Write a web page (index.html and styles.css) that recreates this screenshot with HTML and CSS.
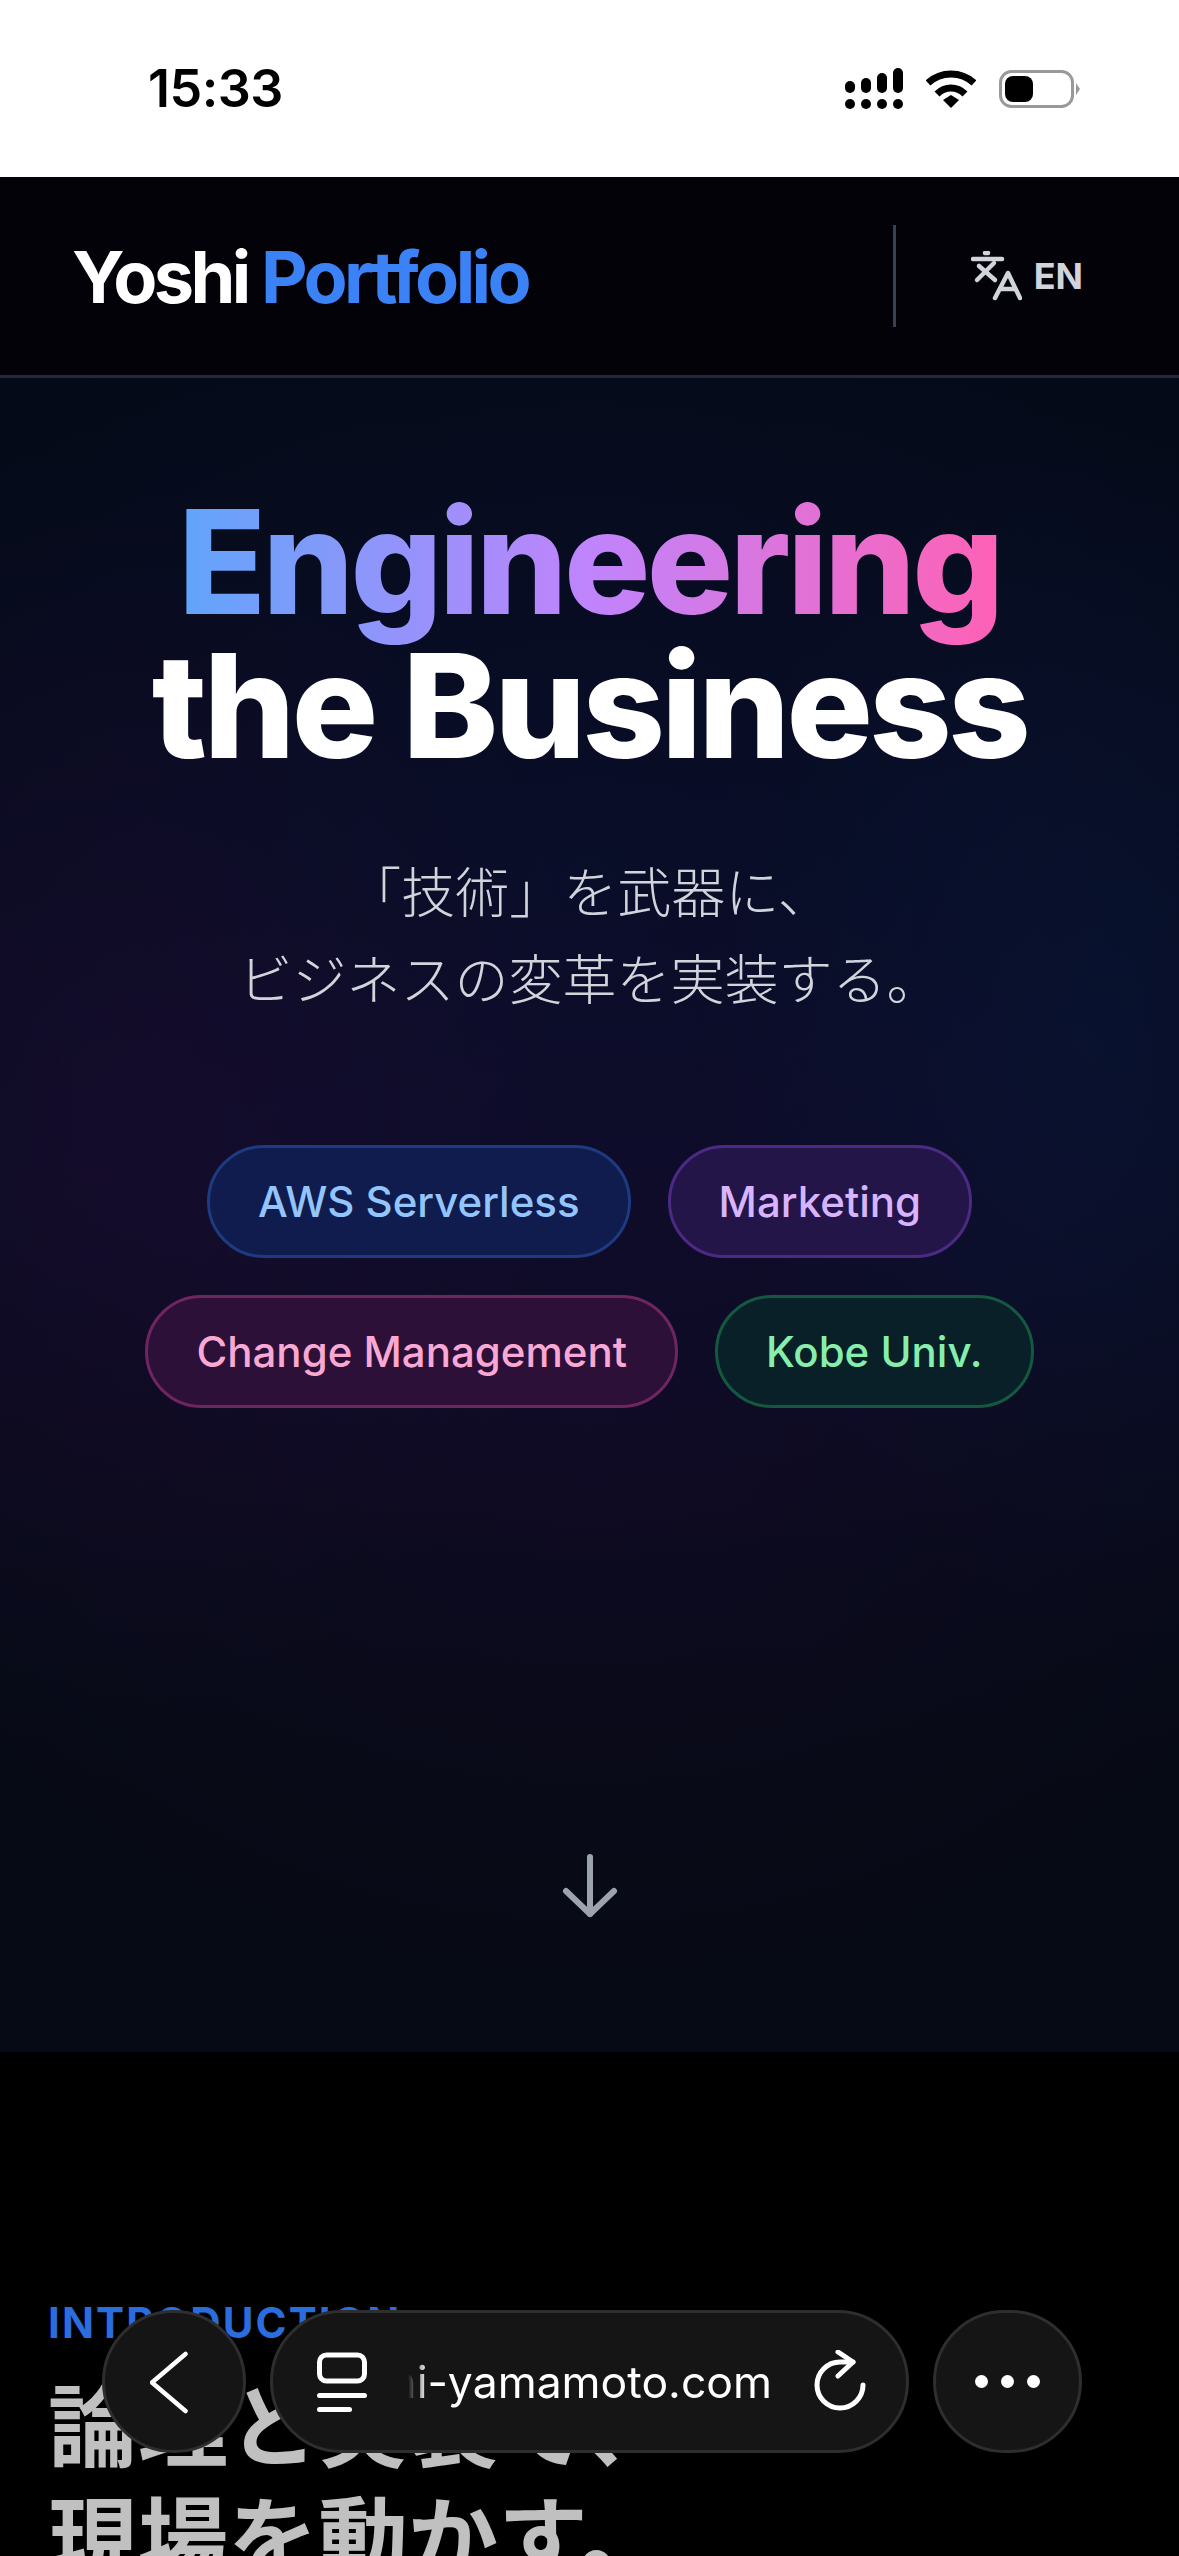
FILE: index.html
```html
<!DOCTYPE html>
<html lang="ja">
<head>
    <meta charset="UTF-8">
    <meta name="viewport" content="width=device-width, initial-scale=1.0">
    <title>Yoshi Portfolio</title>
    <link rel="stylesheet" href="styles.css">
</head>
<body>

    <div class="status-bar">
        <span class="status-time">15:33</span>
        <div class="status-icons">
            <svg width="58" height="42" viewBox="0 0 58 42" fill="#000">
                <rect x="0" y="13" width="10" height="12" rx="5"/>
                <rect x="16" y="10" width="10" height="15" rx="5"/>
                <rect x="32" y="5" width="10" height="20" rx="5"/>
                <rect x="48" y="0" width="10" height="25" rx="5"/>
                <rect x="0" y="31" width="10" height="10" rx="5"/>
                <rect x="16" y="31" width="10" height="10" rx="5"/>
                <rect x="32" y="31" width="10" height="10" rx="5"/>
                <rect x="48" y="31" width="10" height="10" rx="5"/>
            </svg>
            <svg width="50" height="38" viewBox="0 0 50 38" fill="none" stroke="#000" stroke-width="7">
                <path d="M2 13 C15 1 35 1 48 13"/>
                <path d="M11 24 C19 16 31 16 39 24"/>
                <path d="M17 30 L25 25 L33 30 L25 38 Z" fill="#000" stroke="none"/>
            </svg>
            <svg width="82" height="38" viewBox="0 0 82 38">
                <rect x="1.5" y="1.5" width="72" height="35" rx="11" fill="none" stroke="#999" stroke-width="3"/>
                <rect x="6" y="6" width="28" height="26" rx="8" fill="#000"/>
                <path d="M77 13 L81 19 L77 25 Z" fill="#999"/>
            </svg>
        </div>
    </div>

    <nav class="site-nav">
        <a class="logo">Yoshi <span class="logo-accent">Portfolio</span></a>
        <div class="nav-lang">
            <svg width="51" height="51" viewBox="0 0 51 51" fill="none" stroke="#d1d5db" stroke-width="4.5" stroke-linecap="round" stroke-linejoin="round">
                <path d="M2 8 H31"/>
                <path d="M14 2 H17"/>
                <path d="M6 29 L23 12"/>
                <path d="M8 15 L24 29"/>
                <path d="M24 47 L37 22 L49 47"/>
                <path d="M29 38 H44"/>
            </svg>
            <span>EN</span>
        </div>
    </nav>

    <header class="hero">
        <h1 class="hero-title">
            <span class="hero-gradient">Engineering</span><br>the Business
        </h1>
        <p class="hero-sub">「技術」を武器に、<br>ビジネスの変革を実装する。</p>
        <div class="tags">
            <span class="tag tag-blue">AWS Serverless</span>
            <span class="tag tag-purple">Marketing</span>
            <span class="tag tag-pink">Change Management</span>
            <span class="tag tag-green">Kobe Univ.</span>
        </div>
        <svg class="hero-arrow" width="72" height="72" viewBox="0 0 72 72" fill="none" stroke="#9ca3af" stroke-width="6" stroke-linecap="round" stroke-linejoin="round">
            <path d="M36 7 V64"/>
            <path d="M12 41 L36 64 L60 41"/>
        </svg>
    </header>

    <section class="intro">
        <p class="intro-label">INTRODUCTION</p>
        <h2 class="intro-title">論理と実装で、<br>現場を動かす。</h2>
    </section>

    <!-- browser toolbar, floats over the page -->
    <div class="toolbar">
        <button class="tool-btn">
            <svg width="48" height="66" viewBox="0 0 48 66" fill="none" stroke="#fff" stroke-width="4.5" stroke-linecap="round" stroke-linejoin="round">
                <path d="M35.5 5 L2 33.5 L35.5 62"/>
            </svg>
        </button>
        <div class="tool-url">
            <svg width="54" height="62" viewBox="0 0 54 62" fill="none" stroke="#fff" stroke-width="5" stroke-linecap="round" stroke-linejoin="round">
                <rect x="4.5" y="4" width="45" height="26" rx="7"/>
                <path d="M4.5 44.5 H49.5"/>
                <path d="M4.5 58.5 H34.5"/>
            </svg>
            <div class="tool-host"><span>hi-yamamoto.com</span></div>
            <svg width="54" height="64" viewBox="0 0 54 64" fill="none" stroke="#fff" stroke-width="5" stroke-linecap="round" stroke-linejoin="round">
                <path d="M40 12 H27 A23 23 0 1 0 50 35"/>
                <path d="M25 2 L40 12 L25 26"/>
            </svg>
        </div>
        <button class="tool-btn tool-more">
            <i></i><i></i><i></i>
        </button>
    </div>

</body>
</html>
```

FILE: styles.css
```css
/* Reset */
* {
    margin: 0;
    padding: 0;
    box-sizing: border-box;
}

body {
    width: 1179px;
    height: 2556px;
    overflow: hidden;
    background-color: #000;
    color: #fff;
    font-family: 'Inter', 'Noto Sans CJK JP', sans-serif;
}

/* Status bar */
.status-bar {
    height: 177px;
    background-color: #fff;
    color: #000;
    display: flex;
    justify-content: space-between;
    align-items: center;
    padding: 0 98px 0 148px;
}

.status-time {
    font-family: 'Inter', sans-serif;
    font-size: 52px;
    font-weight: 600;
    letter-spacing: -0.5px;
}

.status-icons {
    display: flex;
    align-items: center;
    gap: 23px;
}

/* Nav */
.site-nav {
    height: 201px;
    background-color: #020208;
    border-bottom: 3px solid #1e293b;
    display: flex;
    justify-content: space-between;
    align-items: center;
    padding: 0 96px 0 72px;
}

.logo {
    font-size: 72px;
    font-weight: 700;
    letter-spacing: -3.6px;
    color: #fff;
}

.logo-accent {
    color: #3b82f6;
}

.nav-lang {
    display: flex;
    align-items: center;
    gap: 12px;
    height: 102px;
    padding-left: 75px;
    border-left: 3px solid #374151;
    color: #d1d5db;
    font-size: 36px;
    font-weight: 700;
}

/* Hero */
.hero {
    height: 1674px;
    display: flex;
    flex-direction: column;
    align-items: center;
    padding-top: 112px;
    background:
        radial-gradient(ellipse 480px 620px at 110px 720px, rgba(90, 15, 90, 0.13), transparent),
        radial-gradient(ellipse 400px 600px at 1100px 640px, rgba(10, 40, 90, 0.22), transparent),
        radial-gradient(ellipse 800px 600px at 50% 1050px, rgba(40, 10, 60, 0.25), transparent),
        radial-gradient(ellipse 800px 700px at 50% 500px, rgba(15, 20, 70, 0.3), transparent),
        linear-gradient(#050a18, #080b20 50%, #060a14 85%);
}

.hero-title {
    font-size: 144px;
    font-weight: 800;
    line-height: 144px;
    letter-spacing: -3.6px;
    text-align: center;
}

.hero-gradient {
    background: linear-gradient(90deg, #60a5fa, #c084fc, #ff61b4);
    background-clip: text;
    -webkit-background-clip: text;
    color: transparent;
}

.hero-sub {
    margin-top: 72px;
    font-size: 54px;
    font-weight: 300;
    line-height: 87px;
    color: #d1d5db;
    text-align: center;
}

.tags {
    display: flex;
    flex-wrap: wrap;
    justify-content: center;
    gap: 37px;
    width: 1000px;
    margin-top: 121px;
}

.tag {
    height: 113px;
    padding: 0 48px;
    border: 3px solid;
    border-radius: 57px;
    display: flex;
    align-items: center;
    font-size: 42px;
    font-weight: 500;
}

.tag-blue {
    background-color: #111c4e;
    border-color: #1e3a80;
    color: #93c5fd;
}

.tag-purple {
    background-color: #231548;
    border-color: #4c2a84;
    color: #d8b4fe;
}

.tag-pink {
    background-color: #2d1038;
    border-color: #6f2560;
    color: #f9a8d4;
}

.tag-green {
    background-color: #0a2029;
    border-color: #14583f;
    color: #86efac;
}

.hero-arrow {
    margin-top: 442px;
}

/* Intro */
.intro {
    padding: 246px 48px 0;
}

.intro-label {
    font-size: 42px;
    font-weight: 700;
    letter-spacing: 2.1px;
    line-height: 50px;
    color: #2a6ddf;
}

.intro-title {
    margin-top: 24px;
    font-size: 90px;
    font-weight: 700;
    line-height: 112px;
    color: #c0c0c0;
}

/* Browser toolbar */
.toolbar {
    position: fixed;
    left: 102px;
    top: 2310px;
    display: flex;
    gap: 24px;
}

.tool-btn,
.tool-url {
    height: 143px;
    background-color: #151515;
    border: 3px solid #2e2e2e;
    border-radius: 72px;
    display: flex;
    align-items: center;
}

.tool-btn {
    width: 144px;
    justify-content: center;
}

.tool-more {
    width: 149px;
    gap: 13px;
}

.tool-more i {
    width: 13px;
    height: 13px;
    border-radius: 50%;
    background-color: #fff;
}

.tool-url {
    width: 639px;
    padding: 0 39px 0 42px;
    gap: 22px;
}

.tool-host {
    flex: 1;
    min-width: 0;
    overflow: hidden;
    display: flex;
    justify-content: flex-end;
    padding-right: 19px;
    white-space: nowrap;
    font-size: 44.5px;
    color: #fff;
    -webkit-mask-image: linear-gradient(90deg, transparent 17px, #000 36px);
    mask-image: linear-gradient(90deg, transparent 17px, #000 36px);
}

.tool-host span {
    flex-shrink: 0;
}
```
